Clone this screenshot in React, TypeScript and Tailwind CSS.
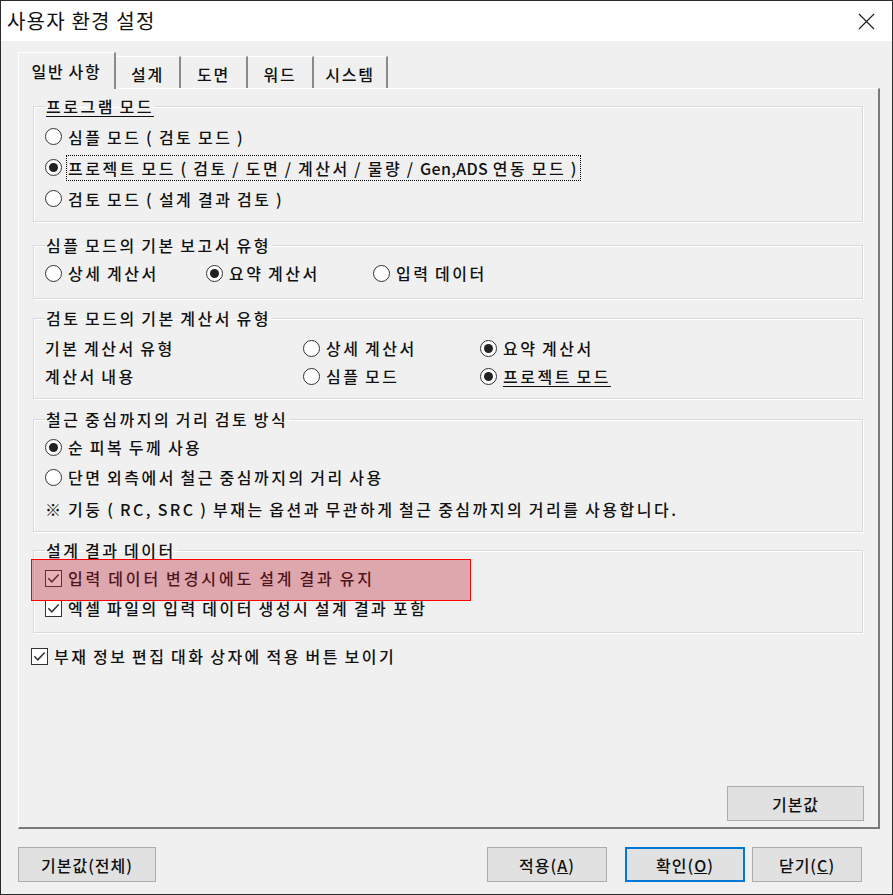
import React from 'react';

const FONT = "font-['Noto_Sans_CJK_KR','Noto_Sans',sans-serif]";

function Radio({ checked }: { checked?: boolean }) {
  return (
    <span className="w-[17px] h-[17px] rounded-full border border-[#333] bg-white flex items-center justify-center shrink-0">
      {checked && <span className="w-[9px] h-[9px] rounded-full bg-[#222]" />}
    </span>
  );
}

function Check() {
  return (
    <span className="w-[17px] h-[17px] border border-[#333] bg-white flex items-center justify-center shrink-0">
      <svg width="15" height="15" viewBox="0 0 15 15">
        <path d="M2.3 7.3 L5.8 10.8 L12.7 3.4" stroke="#333" strokeWidth="1.5" fill="none" />
      </svg>
    </span>
  );
}

function RadioItem({ label, checked, className = '' }: { label: React.ReactNode; checked?: boolean; className?: string }) {
  return (
    <div className={`flex items-center gap-[6px] ${className}`}>
      <Radio checked={checked} />
      <span>{label}</span>
    </div>
  );
}

function Group({ title, className, children }: { title: React.ReactNode; className: string; children: React.ReactNode }) {
  return (
    <fieldset className={`border border-[#d9d9d9] shadow-[inset_1px_1px_0_#ffffff,1px_1px_0_#ffffff] pl-[11px] pr-[10px] ${className}`}>
      <legend className="px-[1px] leading-[20px]">{title}</legend>
      {children}
    </fieldset>
  );
}

function Btn({ children, className = '', primary }: { children: React.ReactNode; className?: string; primary?: boolean }) {
  return (
    <button
      className={`h-[35px] bg-[#e1e1e1] flex items-center justify-center text-[#111] tracking-[1px] ${
        primary ? 'border-2 border-[#0078d7]' : 'border border-[#adadad]'
      } ${className}`}
    >
      {children}
    </button>
  );
}

export default function App() {
  const tabs = [
    { label: '설계', w: 'w-[65px]' },
    { label: '도면', w: 'w-[67px]' },
    { label: '워드', w: 'w-[66px]' },
    { label: '시스템', w: 'w-[74px]' },
  ];

  return (
    <div className={`w-[893px] h-[895px] border border-[#2b2b2b] bg-[#f0f0f0] flex flex-col overflow-hidden text-[16px] font-medium tracking-[2.5px] [word-spacing:-1.5px] text-[#111] ${FONT}`}>
      {/* Title bar */}
      <div className="h-[40px] bg-white flex items-center justify-between pl-[6px] pr-[17px] shrink-0">
        <span className="text-[20px] tracking-[1.2px] [word-spacing:0px] font-normal">사용자 환경 설정</span>
        <svg width="17" height="17" viewBox="0 0 17 17">
          <path d="M1 1 L16 16 M16 1 L1 16" stroke="#222" strokeWidth="1.2" />
        </svg>
      </div>

      <div className="flex-1 flex flex-col pl-[17px] pr-[12px]">
        {/* Tabs */}
        <div className="h-[47px] flex items-end shrink-0 tracking-[1.8px]">
          <div className="relative z-10 w-[98px] h-[37px] -mb-[1px] bg-[#f0f0f0] border-t border-l border-white border-r-2 border-r-[#8a8a8a] flex items-center justify-center">
            일반 사항
          </div>
          {tabs.map((t) => (
            <div
              key={t.label}
              className={`${t.w} h-[32px] border-t border-white border-r-2 border-r-[#8a8a8a] flex items-center justify-center pt-[2px]`}
            >
              {t.label}
            </div>
          ))}
        </div>

        {/* Panel */}
        <div className="h-[741px] shrink-0 border-t border-l border-white border-r-2 border-b-2 border-r-[#7a7a7a] border-b-[#7a7a7a] flex flex-col pl-[14px] pr-[15px] pt-[7px] pb-[6px]">
          <Group title={<span className="underline underline-offset-[3px]">프로그램 모드</span>} className="h-[126px] pt-[5px]">
            <div className="h-[31px] flex items-center">
              <RadioItem label="심플 모드 ( 검토 모드 )" />
            </div>
            <div className="h-[31px] flex items-center">
              <RadioItem
                checked
                label={
                  <span className="border border-dotted border-black px-[1px] -ml-[2px]">
                    프로젝트 모드 ( 검토 / 도면 / 계산서 / 물량 / <span className="tracking-[0.3px]">Gen,ADS</span> 연동 모드 )
                  </span>
                }
              />
            </div>
            <div className="h-[31px] flex items-center">
              <RadioItem label="검토 모드 ( 설계 결과 검토 )" />
            </div>
          </Group>

          <Group title="심플 모드의 기본 보고서 유형" className="h-[64px] mt-[13px] pt-[3px]">
            <div className="h-[30px] flex items-center">
              <RadioItem label="상세 계산서" className="w-[161px]" />
              <RadioItem label="요약 계산서" checked className="w-[167px]" />
              <RadioItem label="입력 데이터" />
            </div>
          </Group>

          <Group title="검토 모드의 기본 계산서 유형" className="h-[91px] mt-[9px] pt-[6px]">
            <div className="h-[28px] flex items-center">
              <span className="w-[258px]">기본 계산서 유형</span>
              <RadioItem label="상세 계산서" className="w-[177px]" />
              <RadioItem label="요약 계산서" checked />
            </div>
            <div className="h-[28px] flex items-center">
              <span className="w-[258px]">계산서 내용</span>
              <RadioItem label="심플 모드" className="w-[177px]" />
              <RadioItem label={<span className="underline underline-offset-[3px]">프로젝트 모드</span>} checked />
            </div>
          </Group>

          <Group title="철근 중심까지의 거리 검토 방식" className="h-[123px] mt-[10px] pt-[3px]">
            <div className="h-[30px] flex items-center">
              <RadioItem label="순 피복 두께 사용" checked />
            </div>
            <div className="h-[30px] flex items-center">
              <RadioItem label="단면 외측에서 철근 중심까지의 거리 사용" />
            </div>
            <div className="h-[33px] flex items-center">
              <span>※ 기둥 ( RC, SRC ) 부재는 옵션과 무관하게 철근 중심까지의 거리를 사용합니다.</span>
            </div>
          </Group>

          <Group title="설계 결과 데이터" className="h-[93px] mt-[8px] pt-[3px]">
            <div className="relative h-[30px] flex items-center gap-[6px]">
              <Check />
              <span className="tracking-[2.9px]">입력 데이터 변경시에도 설계 결과 유지</span>
              <div className="absolute z-10 pointer-events-none -left-[14px] -top-[4px] w-[440px] h-[42px] border border-[#ff0000] bg-[#be1e32]/35" />
            </div>
            <div className="h-[30px] flex items-center gap-[6px]">
              <Check />
              <span>엑셀 파일의 입력 데이터 생성시 설계 결과 포함</span>
            </div>
          </Group>

          <div className="h-[24px] mt-[11px] flex items-center gap-[6px] -ml-[2px]">
            <Check />
            <span>부재 정보 편집 대화 상자에 적용 버튼 보이기</span>
          </div>

          <div className="flex-1" />
          <div className="flex justify-end -mr-[1px]">
            <Btn className="w-[137px]">기본값</Btn>
          </div>
        </div>

        {/* Bottom buttons */}
        <div className="mt-[18px] flex items-center pr-[18px]">
          <Btn className="w-[138px]">기본값(전체)</Btn>
          <div className="flex-1" />
          <Btn className="w-[120px]">
            적용(<span className="underline">A</span>)
          </Btn>
          <Btn primary className="w-[120px] ml-[18px]">
            확인(<span className="underline">O</span>)
          </Btn>
          <Btn className="w-[110px] ml-[7px]">
            닫기(<span className="underline">C</span>)
          </Btn>
        </div>
      </div>
    </div>
  );
}
